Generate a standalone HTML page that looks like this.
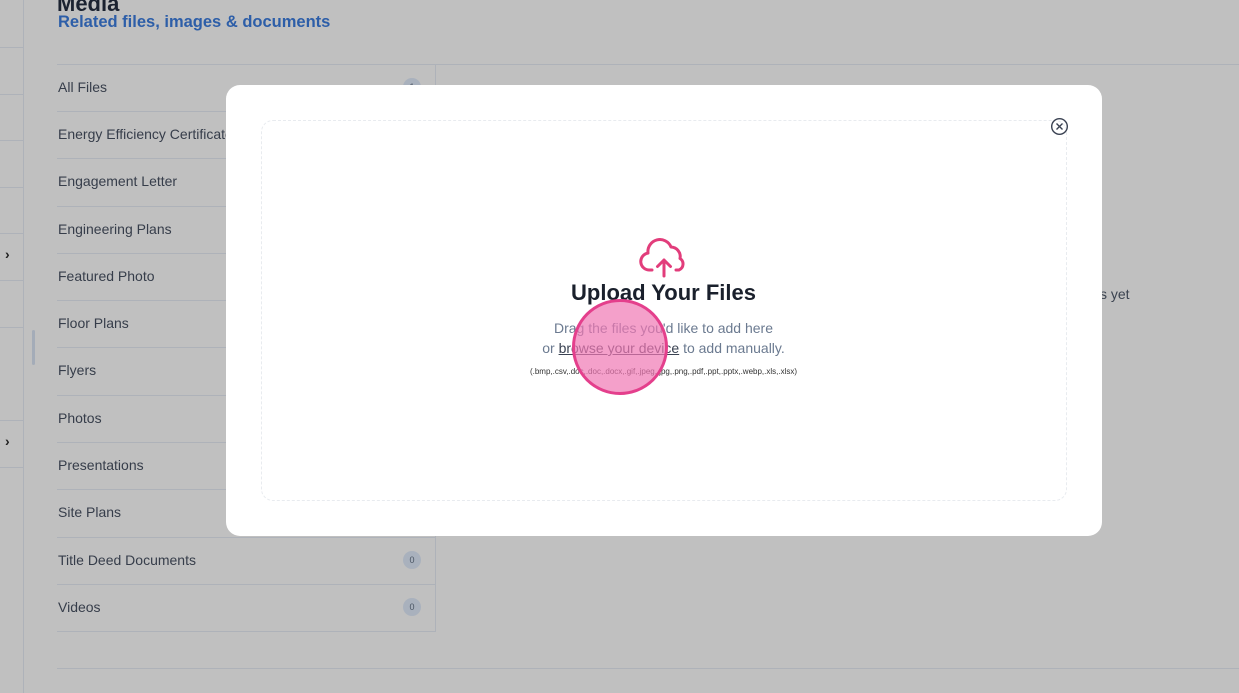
<!DOCTYPE html>
<html><head><style>
body{margin:0;width:1239px;height:693px;overflow:hidden;background:#c0c0c0;font-family:"Liberation Sans",sans-serif;position:relative}
.a{position:absolute}
.hl{position:absolute;height:1px;background:#aeb2b9}
.row{position:absolute;left:57px;width:378px;height:47px;font-size:14px;color:#363d4a}
.row span{position:absolute;left:1px;top:15px}
.badge{position:absolute;right:14px;top:14px;width:18px;height:18px;border-radius:50%;background:#a9b1bd;color:#4a5563;font-size:9px;text-align:center;line-height:18px}
</style></head><body>
<div class="a" style="left:23px;top:0;width:1px;height:693px;background:#aeb2b9"></div>
<div class="hl" style="left:0;width:23px;top:47px"></div>
<div class="hl" style="left:0;width:23px;top:94px"></div>
<div class="hl" style="left:0;width:23px;top:140px"></div>
<div class="hl" style="left:0;width:23px;top:187px"></div>
<div class="hl" style="left:0;width:23px;top:233px"></div>
<div class="hl" style="left:0;width:23px;top:280px"></div>
<div class="hl" style="left:0;width:23px;top:327px"></div>
<div class="hl" style="left:0;width:23px;top:420px"></div>
<div class="hl" style="left:0;width:23px;top:467px"></div>
<div class="a" style="left:5px;top:246px;font-size:14px;font-weight:bold;color:#222">›</div>
<div class="a" style="left:5px;top:433px;font-size:14px;font-weight:bold;color:#222">›</div>
<div class="a" style="left:32px;top:330px;width:3px;height:35px;background:#a4acb8;border-radius:2px"></div>
<div class="a" style="left:57px;top:-9px;font-size:22px;font-weight:bold;color:#1b2230">Media</div>
<div class="a" style="left:58px;top:13px;font-size:16.5px;font-weight:bold;color:#2d5ea8">Related files, images &amp; documents</div>
<div class="hl" style="left:57px;width:1182px;top:64px"></div>
<div class="a" style="left:435px;top:64px;width:1px;height:568px;background:#aeb2b9"></div>
<div class="hl" style="left:57px;width:1182px;top:668px"></div>
<div class="row" style="top:64px"><span>All Files</span><div class="badge">1</div></div>
<div class="hl" style="left:57px;width:378px;top:111px"></div>
<div class="row" style="top:111px"><span>Energy Efficiency Certificate</span></div>
<div class="hl" style="left:57px;width:378px;top:158px"></div>
<div class="row" style="top:158px"><span>Engagement Letter</span></div>
<div class="hl" style="left:57px;width:378px;top:206px"></div>
<div class="row" style="top:206px"><span>Engineering Plans</span></div>
<div class="hl" style="left:57px;width:378px;top:253px"></div>
<div class="row" style="top:253px"><span>Featured Photo</span></div>
<div class="hl" style="left:57px;width:378px;top:300px"></div>
<div class="row" style="top:300px"><span>Floor Plans</span></div>
<div class="hl" style="left:57px;width:378px;top:347px"></div>
<div class="row" style="top:347px"><span>Flyers</span></div>
<div class="hl" style="left:57px;width:378px;top:395px"></div>
<div class="row" style="top:395px"><span>Photos</span></div>
<div class="hl" style="left:57px;width:378px;top:442px"></div>
<div class="row" style="top:442px"><span>Presentations</span></div>
<div class="hl" style="left:57px;width:378px;top:489px"></div>
<div class="row" style="top:489px"><span>Site Plans</span></div>
<div class="hl" style="left:57px;width:378px;top:537px"></div>
<div class="row" style="top:537px"><span>Title Deed Documents</span><div class="badge">0</div></div>
<div class="hl" style="left:57px;width:378px;top:584px"></div>
<div class="row" style="top:584px"><span>Videos</span><div class="badge">0</div></div>
<div class="hl" style="left:57px;width:378px;top:631px"></div>
<div class="a" style="left:1100px;top:286px;font-size:14px;color:#3b4350">s yet</div>

<div class="a" style="left:226px;top:85px;width:876px;height:451px;background:#fff;border-radius:14px"></div>
<div class="a" style="left:261px;top:120px;width:804px;height:379px;border:1px dashed #e8ebef;border-radius:12px"></div>
<svg class="a" style="left:1050px;top:117px" width="19" height="19" viewBox="0 0 19 19"><circle cx="9.5" cy="9.5" r="7.8" fill="none" stroke="#3a4252" stroke-width="1.4"/><path d="M6.5 6.5l6 6M12.5 6.5l-6 6" stroke="#3a4252" stroke-width="1.4"/></svg>
<svg class="a" style="left:638px;top:238px" width="52" height="40" viewBox="0 0 52 40"><path d="M14 32H11a8.5 8.5 0 0 1-1-16.9A12 12 0 0 1 33 9a9.5 9.5 0 0 1 9 11.5A6.5 6.5 0 0 1 41 32h-3" fill="none" stroke="#e23d7b" stroke-width="3" stroke-linecap="round" stroke-linejoin="round"/><path d="M26 38V22M19.5 28.5L26 22l6.5 6.5" fill="none" stroke="#e23d7b" stroke-width="3" stroke-linecap="round" stroke-linejoin="round"/></svg>
<div class="a" style="left:400px;width:527px;top:280px;text-align:center;font-size:22px;font-weight:bold;color:#1a202c">Upload Your Files</div>
<div class="a" style="left:400px;width:527px;top:318px;text-align:center;font-size:14px;color:#6b7a90;line-height:20px">Drag the files you'd like to add here<br>or <u style="color:#3a4252">browse your device</u> to add manually.</div>
<div class="a" style="left:400px;width:527px;top:367px;text-align:center;font-size:8px;color:#333">(.bmp,.csv,.doc,.doc,.docx,.gif,.jpeg,.jpg,.png,.pdf,.ppt,.pptx,.webp,.xls,.xlsx)</div>
<div class="a" style="left:572px;top:299px;width:90px;height:90px;border-radius:50%;background:rgba(240,120,180,0.7);border:3px solid #e43f8c"></div>
</body></html>
